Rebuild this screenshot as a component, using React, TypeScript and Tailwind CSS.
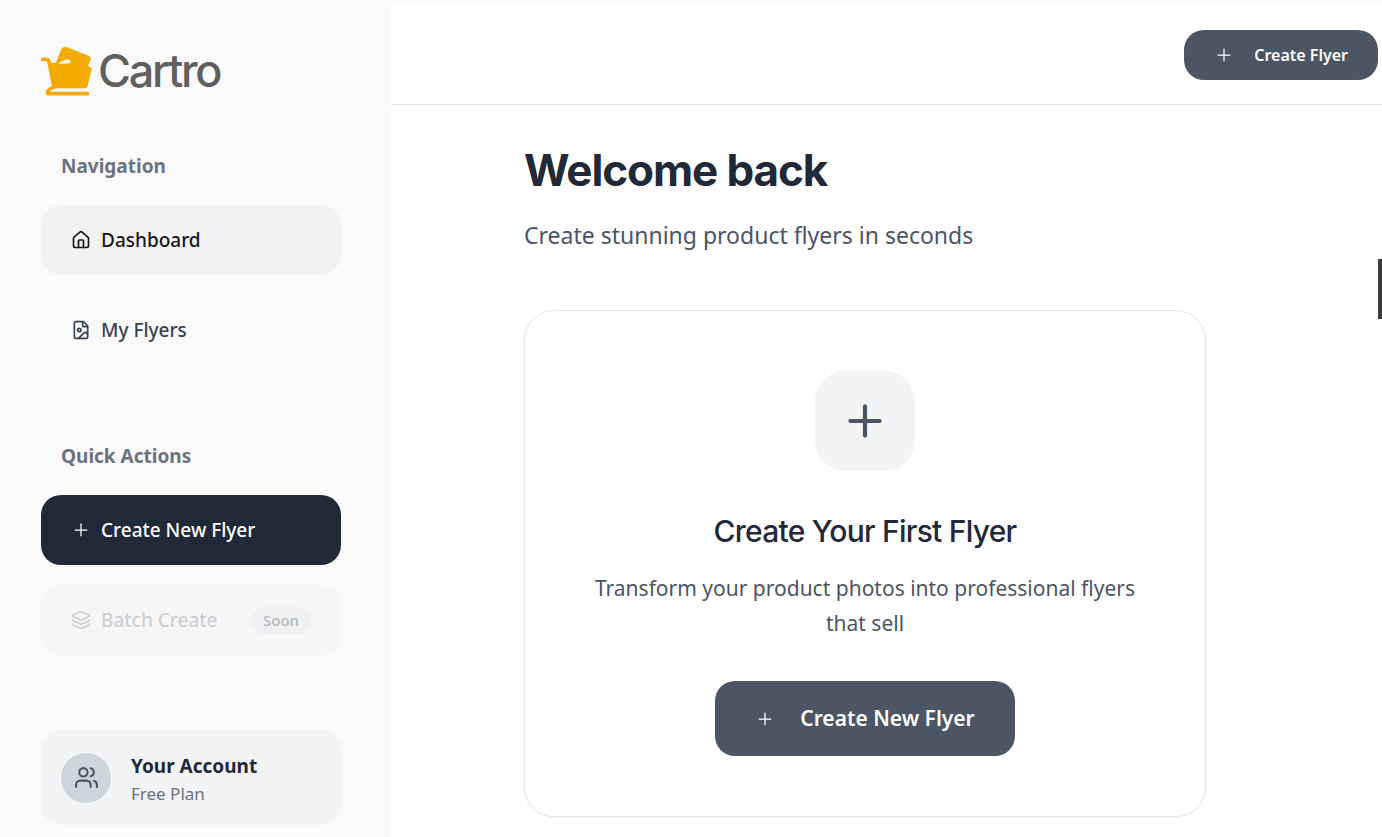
import React from 'react';
import { FileImage, House, Layers, Plus, Users } from 'lucide-react';

const CartroLogo: React.FC = () => (
  <a href="#" className="flex items-center gap-1.5">
    <svg width="51" height="50" viewBox="33 46 153 150" fill="none" aria-hidden="true">
      <path
        d="M38 86H48Q55 86 57 93L72 170Q52 176 53 189H172"
        stroke="#f2ab02"
        strokeWidth="11"
        strokeLinecap="round"
        strokeLinejoin="round"
      />
      <path
        d="M56 97H77L94 56Q99 46 109 49L176 75Q185 79 182 88L175 103Q174 108 179 109Q186 110 185 116L173 165Q171 173 162 173H72Z"
        fill="#f2ab02"
      />
      <path d="M86 99Q94 90 107 87Q115 85 120 89Q123 92 122 98Z" fill="#fafafa" />
    </svg>
    <span className="font-['Inter',sans-serif] text-[45px] leading-[52px] font-medium tracking-tighter text-[#5f5f5f]">
      Cartro
    </span>
  </a>
);

const Sidebar: React.FC = () => {
  const navItems = [
    { id: 'dashboard', label: 'Dashboard', icon: House, style: 'bg-[#f3f3f3] text-[#171717]' },
    { id: 'flyers', label: 'My Flyers', icon: FileImage, style: 'text-gray-700' }
  ];

  return (
    <aside className="flex w-[391px] shrink-0 flex-col bg-[#fafafa] pt-[45px] pr-[50px] pb-3 pl-[41px]">
      <CartroLogo />

      <h2 className="mt-[55px] pl-5 text-[19px] leading-7 font-bold text-[#6b7280]">Navigation</h2>
      <nav className="mt-[25px] flex flex-col gap-5">
        {navItems.map(({ id, label, icon: Icon, style }) => (
          <a
            key={id}
            href={`#${id}`}
            className={`flex h-[70px] items-center gap-2.5 rounded-[20px] px-[30px] text-[19px] font-medium ${style}`}
          >
            <Icon className="h-5 w-5" />
            {label}
          </a>
        ))}
      </nav>

      <h2 className="mt-[77px] pl-5 text-[19px] leading-7 font-bold text-[#6b7280]">Quick Actions</h2>
      <div className="mt-[25px] flex flex-col gap-5">
        <button className="flex h-[70px] items-center gap-2.5 rounded-[20px] bg-[#1f2937] px-[30px] text-[19px] font-medium text-white">
          <Plus className="h-5 w-5" strokeWidth={1.5} />
          Create New Flyer
        </button>
        <button
          disabled
          className="flex h-[70px] items-center gap-2.5 rounded-[20px] bg-[#f6f6f6] px-[30px] text-[19px] font-medium text-[#cdd0d6]"
        >
          <Layers className="h-5 w-5" />
          Batch Create
          <span className="ml-auto rounded-full bg-[#eff0f2] px-3 text-[15px] leading-[27px] font-medium text-[#b3b6bc]">
            Soon
          </span>
        </button>
      </div>

      <div className="mt-[75px] flex h-[95px] items-center gap-5 rounded-[20px] bg-[#f3f4f6] px-5">
        <div className="flex h-[50px] w-[50px] items-center justify-center rounded-full bg-[#d1d5db]">
          <Users className="h-[25px] w-[25px] text-[#4b5563]" />
        </div>
        <div className="pt-1">
          <p className="text-[19px] leading-7 font-bold text-[#1f2937]">Your Account</p>
          <p className="text-[17px] leading-7 text-[#6b7280]">Free Plan</p>
        </div>
      </div>
    </aside>
  );
};

const App: React.FC = () => {
  return (
    <div className="relative flex min-h-screen overflow-hidden bg-[#f9fafb] font-['Noto_Sans',sans-serif]">
      <Sidebar />

      <div className="mt-[5px] flex flex-1 flex-col bg-white">
        <header className="flex h-[100px] items-center justify-end border-b border-gray-200 pr-1">
          <button className="flex h-[50px] items-center gap-5 rounded-[20px] bg-[#4b5563] px-[30px] text-base font-semibold text-white">
            <Plus className="h-5 w-5" strokeWidth={1.5} />
            Create Flyer
          </button>
        </header>

        <main className="flex-1 pt-10 pr-[43px] pb-5">
          <div className="mx-auto max-w-[682px]">
            <h1 className="font-['Inter',sans-serif] text-[44px] leading-[50px] font-bold tracking-tight text-[#1f2937]">
              Welcome back
            </h1>
            <p className="mt-5 text-[23px] leading-10 text-[#4b5563]">Create stunning product flyers in seconds</p>

            <section className="mt-[55px] flex flex-col items-center rounded-[30px] border border-gray-200 bg-white px-[60px] py-[60px] text-center shadow-xs">
              <div className="flex h-[100px] w-[100px] items-center justify-center rounded-[30px] bg-[#f3f4f6]">
                <Plus className="h-[50px] w-[50px] text-[#4b5563]" />
              </div>
              <h2 className="mt-10 font-['Inter',sans-serif] text-[30px] leading-10 font-medium tracking-tight text-[#1f2937]">
                Create Your First Flyer
              </h2>
              <p className="mt-5 text-[21px] leading-[35px] text-[#4b5563]">
                Transform your product photos into professional flyers that sell
              </p>
              <button className="mt-10 flex h-[75px] items-center gap-[25px] rounded-[20px] bg-[#4b5563] px-10 text-[21px] font-semibold text-white">
                <Plus className="h-5 w-5" strokeWidth={1.5} />
                Create New Flyer
              </button>
            </section>
          </div>
        </main>
      </div>

      <div className="absolute top-[259px] right-0 h-[60px] w-1 bg-[#3c3d3b] shadow-lg" />
    </div>
  );
};

export default App;
